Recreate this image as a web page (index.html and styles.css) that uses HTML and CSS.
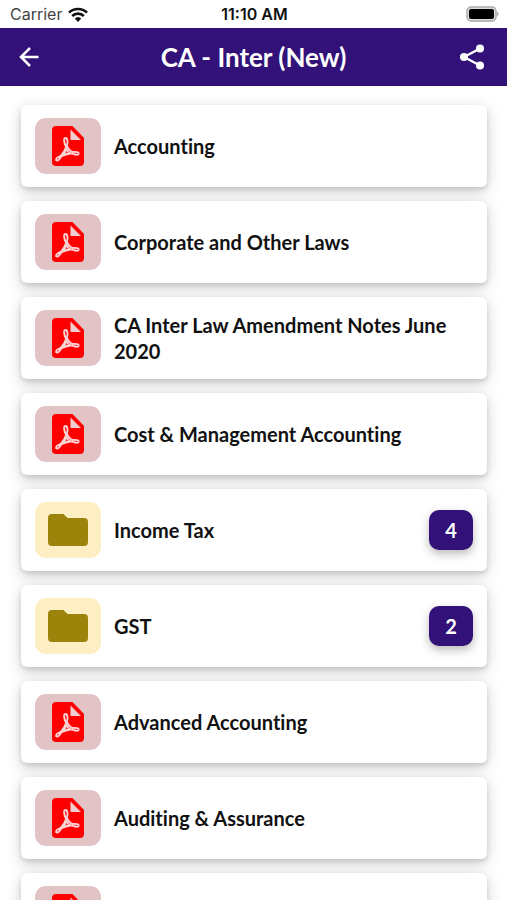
FILE: index.html
```html
<!DOCTYPE html>
<html lang="en">
<head>
<meta charset="utf-8">
<meta name="viewport" content="width=device-width, initial-scale=1">
<title>CA - Inter (New)</title>
<link rel="stylesheet" href="styles.css">
</head>
<body>
<svg class="symbols" aria-hidden="true">
  <symbol id="pdf" viewBox="0 0 32 40">
    <path fill="#fe0000" d="M4 0H20.500L32 12V36a4 4 0 0 1-4 4H4a4 4 0 0 1-4-4V4a4 4 0 0 1 4-4Z"/>
    <path fill="#f3cccf" d="M18.500 3.500V14H29Z"/>
    <path fill="none" stroke="#fbd3d5" stroke-width="1.900" stroke-linejoin="round" d="M13.500 12c-2 0-1.800 4 .6 9-1.500 4-3.500 7-5 8.700-3.500 1.500-5.500 3-5 4.400 1 1.700 3.400-.6 5.600-4 3.800-1.400 7-2.200 10.300-2.700 3 1.500 6.300 2 6.700.4.400-1.800-3-2.200-6.500-1.800-2.500-1.400-4.200-3.400-5.300-5.800 1-4 .9-8.200-1.400-8.200Zm.9 11c1 1.800 2.100 3 3.600 4.100-2.300.4-4.200.9-6.100 1.600 1-1.800 1.800-3.600 2.500-5.700Z"/>
  </symbol>
  <symbol id="folder" viewBox="0 0 40 32">
    <path fill="#9b8409" d="M4 0H15.500l4 4H36a4 4 0 0 1 4 4V28a4 4 0 0 1-4 4H4a4 4 0 0 1-4-4V4a4 4 0 0 1 4-4Z"/>
  </symbol>
</svg>
<div class="app">
  <div class="status">
    <div class="status-left">
      <span>Carrier</span>
      <svg class="wifi" viewBox="0 0 20 15" aria-label="Wi-Fi">
        <g fill="none" stroke="#111" stroke-width="2.600"><path d="M1 5.600a13 13 0 0 1 18 0"/><path d="M4.200 9a8.300 8.300 0 0 1 11.600 0"/></g>
        <path fill="#111" d="M10 15l-3.300-3.400a4.800 4.800 0 0 1 6.600 0Z"/>
      </svg>
    </div>
    <time class="clock">11:10 AM</time>
    <div class="status-right">
      <svg class="battery" viewBox="0 0 33 16" aria-label="Battery full">
        <rect x="1" y="1" width="29" height="14" rx="4" fill="#ddd" stroke="#aaa" stroke-width="1.500"/>
        <rect x="3" y="3" width="25" height="10" rx="2" fill="#000"/>
        <path fill="#aaa" d="M31 5.500c2 1 2 4 0 5Z"/>
      </svg>
    </div>
  </div>
  <header class="bar">
    <button class="icon-button" aria-label="Back">
      <svg class="back" viewBox="0 0 20 20"><path fill="none" stroke="#fff" stroke-width="2.500" d="M19.500 10H2M11 1 2 10l9 9"/></svg>
    </button>
    <h1>CA - Inter (New)</h1>
    <button class="icon-button share-button" aria-label="Share">
      <svg class="share" viewBox="0 0 24 26"><path fill="none" stroke="#fff" stroke-width="2.400" d="M20 4.500 4 13l16 8.500"/><g fill="#fff"><circle cx="20" cy="4.500" r="4"/><circle cx="4" cy="13" r="4"/><circle cx="20" cy="21.500" r="4"/></g></svg>
    </button>
  </header>
  <main class="list">
    <a class="card" href="#accounting"><span class="tile pdf"><svg><use href="#pdf"/></svg></span><span class="name">Accounting</span></a>
    <a class="card" href="#laws"><span class="tile pdf"><svg><use href="#pdf"/></svg></span><span class="name">Corporate and Other Laws</span></a>
    <a class="card" href="#amendments"><span class="tile pdf"><svg><use href="#pdf"/></svg></span><span class="name">CA Inter Law Amendment Notes June 2020</span></a>
    <a class="card" href="#cost"><span class="tile pdf"><svg><use href="#pdf"/></svg></span><span class="name">Cost &amp; Management Accounting</span></a>
    <a class="card" href="#income-tax"><span class="tile folder"><svg><use href="#folder"/></svg></span><span class="name">Income Tax</span><span class="count">4</span></a>
    <a class="card" href="#gst"><span class="tile folder"><svg><use href="#folder"/></svg></span><span class="name">GST</span><span class="count">2</span></a>
    <a class="card" href="#advanced"><span class="tile pdf"><svg><use href="#pdf"/></svg></span><span class="name">Advanced Accounting</span></a>
    <a class="card" href="#auditing"><span class="tile pdf"><svg><use href="#pdf"/></svg></span><span class="name">Auditing &amp; Assurance</span></a>
    <a class="card" href="#more" aria-label="More"><span class="tile pdf"><svg><use href="#pdf"/></svg></span></a>
  </main>
</div>
</body>
</html>
```
FILE: styles.css
```css
* { box-sizing: border-box; }

body {
  margin: 0;
  background: #fff;
  color: #111;
  font-family: Lato, sans-serif;
  font-variant-ligatures: none;
}

.symbols {
  position: absolute;
  width: 0;
  height: 0;
}

.app {
  display: flex;
  flex-direction: column;
  height: 100vh;
}

.status {
  display: grid;
  grid-template-columns: 1fr auto 1fr;
  align-items: center;
  flex: none;
  height: 28px;
  padding: 0 8px 0 10px;
  font: 16px/24px Inter, sans-serif;
}

.status-left {
  display: flex;
  align-items: center;
  gap: 6px;
  color: #444;
}

.wifi { width: 20px; height: 15px; }
.clock { font-weight: 600; }
.status-right { display: flex; justify-content: flex-end; }
.battery { width: 33px; height: 16px; }

.bar {
  display: flex;
  align-items: center;
  justify-content: space-between;
  flex: none;
  height: 58px;
  padding: 0 16px;
  background: #321278;
  color: #fff;
}

.bar h1 {
  margin: 0;
  font-size: 26px;
  line-height: 32px;
  font-weight: 700;
}

.icon-button {
  display: flex;
  align-items: center;
  width: 38px;
  height: 40px;
  padding: 0 3px;
  border: 0;
  background: none;
}

.share-button { justify-content: flex-end; padding: 0 7px; }
.back { width: 20px; height: 20px; }
.share { width: 24px; height: 26px; }

.list {
  display: flex;
  flex-direction: column;
  flex: 1;
  gap: 14px;
  min-height: 0;
  padding: 19px 20px 20px 21px;
  overflow-y: auto;
  scrollbar-width: none;
}

.card {
  display: flex;
  align-items: center;
  flex: none;
  gap: 13px;
  min-height: 82px;
  padding: 0 14px;
  border-radius: 6px;
  background: #fff;
  box-shadow: 0 3px 5px rgba(0, 0, 0, 0.12), 0 4px 16px rgba(0, 0, 0, 0.18);
  color: inherit;
  text-decoration: none;
}

.tile {
  display: flex;
  align-items: center;
  justify-content: center;
  flex: none;
  width: 66px;
  height: 56px;
  border-radius: 11px;
}

.tile.pdf { background: #e3c4c6; }
.tile.folder { background: #fdeec3; }
.pdf svg { width: 32px; height: 40px; }
.folder svg { width: 40px; height: 32px; }

.name {
  flex: 1;
  font-size: 20px;
  line-height: 26px;
  font-weight: 700;
}

.count {
  display: flex;
  align-items: center;
  justify-content: center;
  width: 44px;
  height: 40px;
  border-radius: 10px;
  background: #321278;
  box-shadow: 0 4px 10px rgba(0, 0, 0, 0.27);
  color: #fff;
  font-size: 20px;
  font-weight: 700;
}
```
